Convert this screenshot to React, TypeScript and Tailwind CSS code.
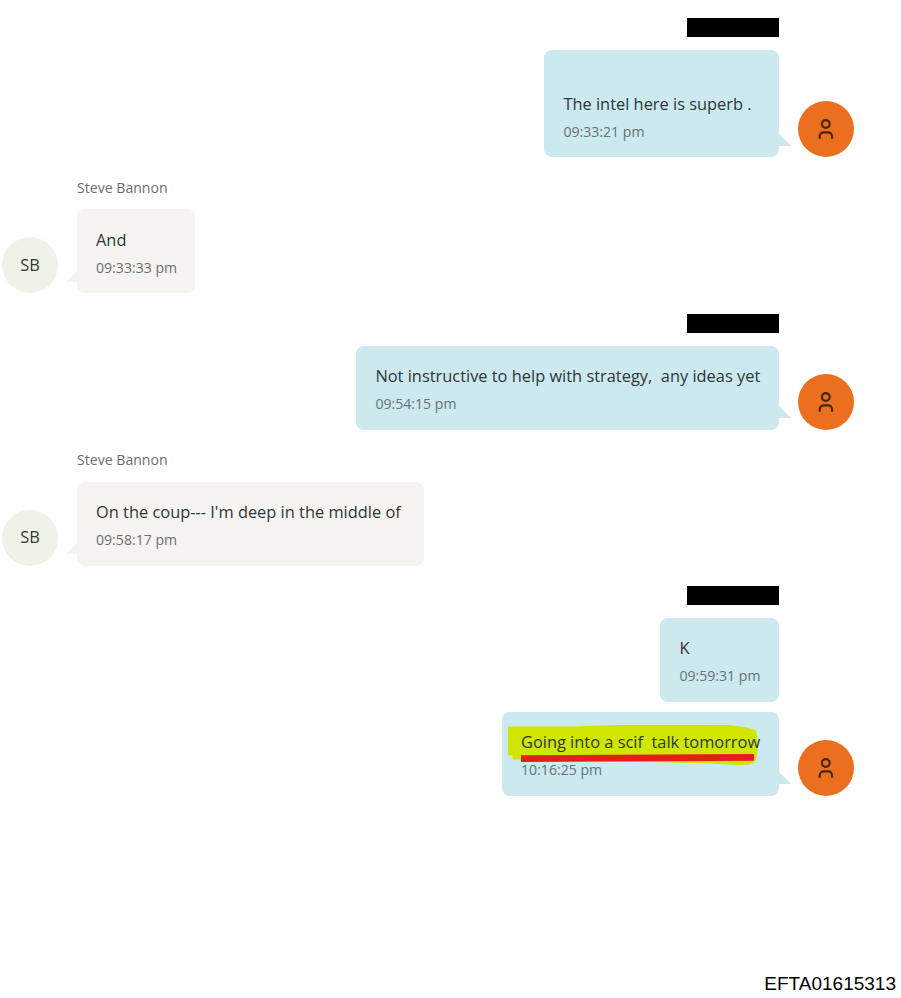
import React from 'react';

interface Message {
  text: string;
  time: string;
  width: string;
  spaced?: boolean;
  marked?: boolean;
}

interface Group {
  sender: 'me' | 'them';
  messages: Message[];
}

const groups: Group[] = [
  { sender: 'me', messages: [{ text: 'The intel here is superb .', time: '09:33:21 pm', width: 'w-[234.6px]', spaced: true }] },
  { sender: 'them', messages: [{ text: 'And', time: '09:33:33 pm', width: 'w-[118.4px]' }] },
  { sender: 'me', messages: [{ text: 'Not instructive to help with strategy,  any ideas yet', time: '09:54:15 pm', width: 'w-[422.6px]' }] },
  { sender: 'them', messages: [{ text: "On the coup--- I'm deep in the middle of", time: '09:58:17 pm', width: 'w-[347.4px]' }] },
  {
    sender: 'me',
    messages: [
      { text: 'K', time: '09:59:31 pm', width: 'w-[118.6px]' },
      { text: 'Going into a scif  talk tomorrow', time: '10:16:25 pm', width: 'w-[277px]', marked: true },
    ],
  },
];

const PersonIcon = () => (
  <svg width="18" height="22" viewBox="0 0 18 22" fill="none" stroke="#46260f" strokeWidth="2.2">
    <circle cx="8.8" cy="6" r="3.9" />
    <path d="M2.7 20.8v-2.4a4 4 0 0 1 4-4h4.4a4 4 0 0 1 4 4v2.4" />
  </svg>
);

// Marker stroke and underline, drawn behind and below the message text
const Marker = () => (
  <svg className="absolute left-[5px] top-[12px]" width="254" height="44" viewBox="0 0 254 44">
    <path
      d="M1 2.5H72C92 .9 112 .9 140 .9H222C233 2.1 244 3.3 249 6.7C251 14 251 27 249 36C246 41 239 41.2 230 40.9C212 39.7 190 39.2 170 38.7C110 37.2 60 37 20 35.6H5.5V31.2H1Z"
      fill="#cfe600"
    />
    <path d="M14 31.2L247 30V36.8L14 38Z" fill="#e51d1b" />
  </svg>
);

const Bubble: React.FC<{ message: Message; mine: boolean; last: boolean }> = ({ message, mine, last }) => (
  <div
    className={`relative shrink-0 rounded-lg pl-[19px] ${message.width} ${
      message.spaced ? 'h-[107.4px] pt-[41.9px]' : 'h-[84px] pt-[18.35px]'
    } ${mine ? 'bg-[#cce9ef]' : 'bg-[#f5f4f1]'}`}
  >
    {message.marked && <Marker />}
    <p className="relative whitespace-pre text-[16.4px] leading-6 text-[#303638]">{message.text}</p>
    <p className="relative mt-[6px] text-[14.1px] leading-5 text-[#687174]">{message.time}</p>
    {last && (
      <svg
        className={`absolute bottom-[11.5px] h-[12px] w-[12px] ${mine ? '-right-[11.5px]' : '-left-[11.5px]'}`}
        viewBox="0 0 12 12"
      >
        <path d={mine ? 'M0 0L12 12H0Z' : 'M12 0L0 12H12Z'} fill={mine ? '#cce9ef' : '#f5f2f3'} />
      </svg>
    )}
  </div>
);

const Avatar = ({ mine }: { mine: boolean }) => (
  <div
    className={`flex size-[56px] shrink-0 items-center justify-center rounded-full text-[16.4px] text-[#373832] ${
      mine ? 'bg-[#ec6f20]' : 'bg-[#f0f1e7]'
    }`}
  >
    {mine ? <PersonIcon /> : 'SB'}
  </div>
);

const MessageGroup = ({ group }: { group: Group }) => {
  const mine = group.sender === 'me';

  return (
    <section className={`flex items-end gap-[19px] ${mine ? 'flex-row-reverse' : ''}`}>
      <Avatar mine={mine} />
      <div className={`flex flex-col ${mine ? 'items-end' : 'items-start'}`}>
        <div className="mb-3 flex h-5 items-start">
          {mine ? (
            <div className="h-[19.5px] w-[92.5px] bg-black" />
          ) : (
            <span className="pt-[0.4px] text-[14.1px] leading-5 text-[#6d6d6d]">Steve Bannon</span>
          )}
        </div>
        <div className={`flex flex-col gap-[10px] ${mine ? 'items-end' : 'items-start'}`}>
          {group.messages.map((message, idx) => (
            <Bubble key={message.time} message={message} mine={mine} last={idx === group.messages.length - 1} />
          ))}
        </div>
      </div>
    </section>
  );
};

export default function App() {
  return (
    <main className="flex h-[998px] w-[901px] flex-col justify-between overflow-hidden bg-white font-['Open_Sans',sans-serif]">
      <div className="flex w-[854px] flex-col gap-[20.2px] pl-[2px] pt-[17.8px]">
        {groups.map((group, idx) => (
          <MessageGroup key={idx} group={group} />
        ))}
      </div>
      <footer className="pb-[2px] pr-[5px] text-right font-['Liberation_Sans',sans-serif] text-[19px] leading-6 text-black">
        EFTA01615313
      </footer>
    </main>
  );
}
